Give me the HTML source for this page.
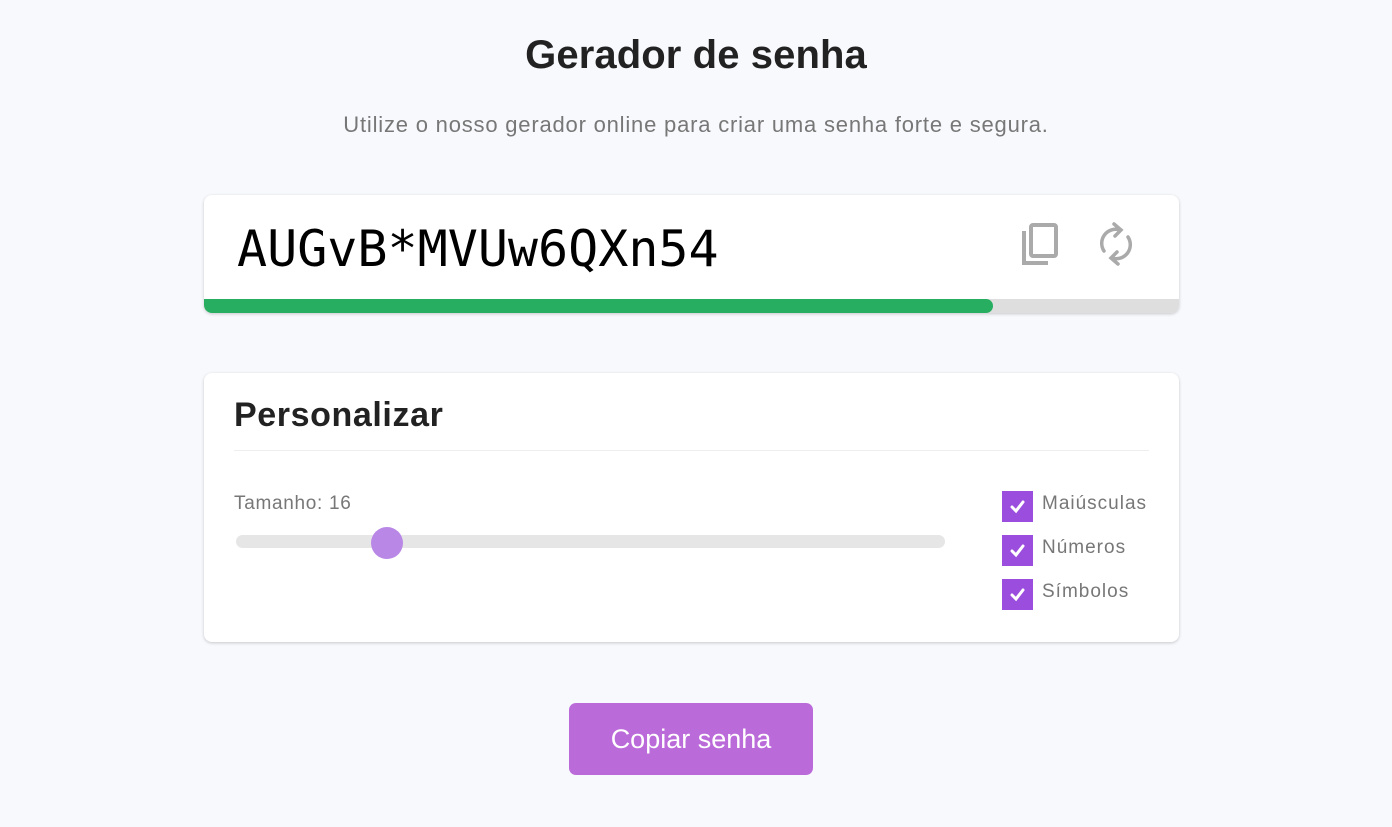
<!DOCTYPE html>
<html><head><meta charset="utf-8"><style>
*{box-sizing:border-box;margin:0;padding:0}
body{width:1392px;height:827px;background:#f8f9fd;font-family:"Liberation Sans",sans-serif;position:relative;overflow:hidden}
h1{position:absolute;top:33px;left:0;width:100%;text-align:center;font-size:40px;font-weight:bold;color:#222;letter-spacing:0.1px}
.sub{position:absolute;top:112px;left:0;width:100%;text-align:center;font-size:22px;color:#777;letter-spacing:0.8px}
.card{position:absolute;left:204px;width:975px;background:#fff;border-radius:8px;box-shadow:0 1px 3px rgba(0,0,0,.2);overflow:hidden}
.pw{position:absolute;left:33px;top:25px;font-family:"DejaVu Sans Mono",monospace;font-size:50px;color:#000}
.bar{position:absolute;left:0;bottom:0;width:100%;height:14px;background:#dedede}
.bar div{width:789px;height:100%;background:#27ae60;border-radius:0 7px 7px 0}
h2{position:absolute;left:30px;top:23px;font-size:34px;font-weight:bold;color:#222;letter-spacing:0.6px}
.hr{position:absolute;left:30px;right:30px;top:77px;border-top:1px solid #eee}
.lbl{position:absolute;left:30px;top:120px;font-size:19px;color:#777;letter-spacing:0.7px}
.track{position:absolute;left:32px;top:162px;width:709px;height:13px;background:#e6e6e6;border-radius:7px}
.thumb{position:absolute;left:167px;top:154px;width:32px;height:32px;border-radius:50%;background:#b987e6}
.cb{position:absolute;left:798px;width:31px;height:31px;background:#9b4ddd}
.cl{position:absolute;left:838px;font-size:19px;color:#777;letter-spacing:1px}
.btn{position:absolute;left:569px;top:703px;width:244px;height:72px;background:#bb6bd9;border-radius:7px;color:#fff;font-size:27px;text-align:center;line-height:72px}
</style></head><body>
<h1>Gerador de senha</h1>
<div class="sub">Utilize o nosso gerador online para criar uma senha forte e segura.</div>
<div class="card" style="top:195px;height:118px">
<div class="pw">AUGvB*MVUw6QXn54</div>
<svg style="position:absolute;left:816px;top:28px" width="40" height="42" viewBox="0 0 40 42" fill="none" stroke="#aaa" stroke-width="4"><path d="M4 8V40H28"/><rect x="11" y="2" width="25" height="31" rx="2"/></svg>
<svg style="position:absolute;left:890px;top:26px" width="44" height="46" viewBox="0 0 44 46" fill="none" stroke="#aaa" stroke-width="3.5" stroke-linecap="round"><path d="M10 30A14 14 0 0 1 26 9"/><path d="M20 3L27 9L21 15"/><path d="M34 16A14 14 0 0 1 18 37"/><path d="M24 43L17 37L23 31"/></svg>
<div class="bar"><div></div></div>
</div>
<div class="card" style="top:373px;height:269px">
<h2>Personalizar</h2><div class="hr"></div>
<div class="lbl">Tamanho: 16</div>
<div class="track"></div><div class="thumb"></div>
<div class="cb" style="top:118px"></div><div class="cl" style="top:120px">Maiúsculas</div>
<div class="cb" style="top:162px"></div><div class="cl" style="top:164px">Números</div>
<div class="cb" style="top:206px"></div><div class="cl" style="top:208px">Símbolos</div>
<svg style="position:absolute;left:798px;top:118px" width="31" height="120" viewBox="0 0 31 120" fill="none" stroke="#fff" stroke-width="3" stroke-linecap="round"><path d="M10 16L14 20L21 11"/><path d="M10 60L14 64L21 55"/><path d="M10 104L14 108L21 99"/></svg>
</div>
<div class="btn">Copiar senha</div>
</body></html>
